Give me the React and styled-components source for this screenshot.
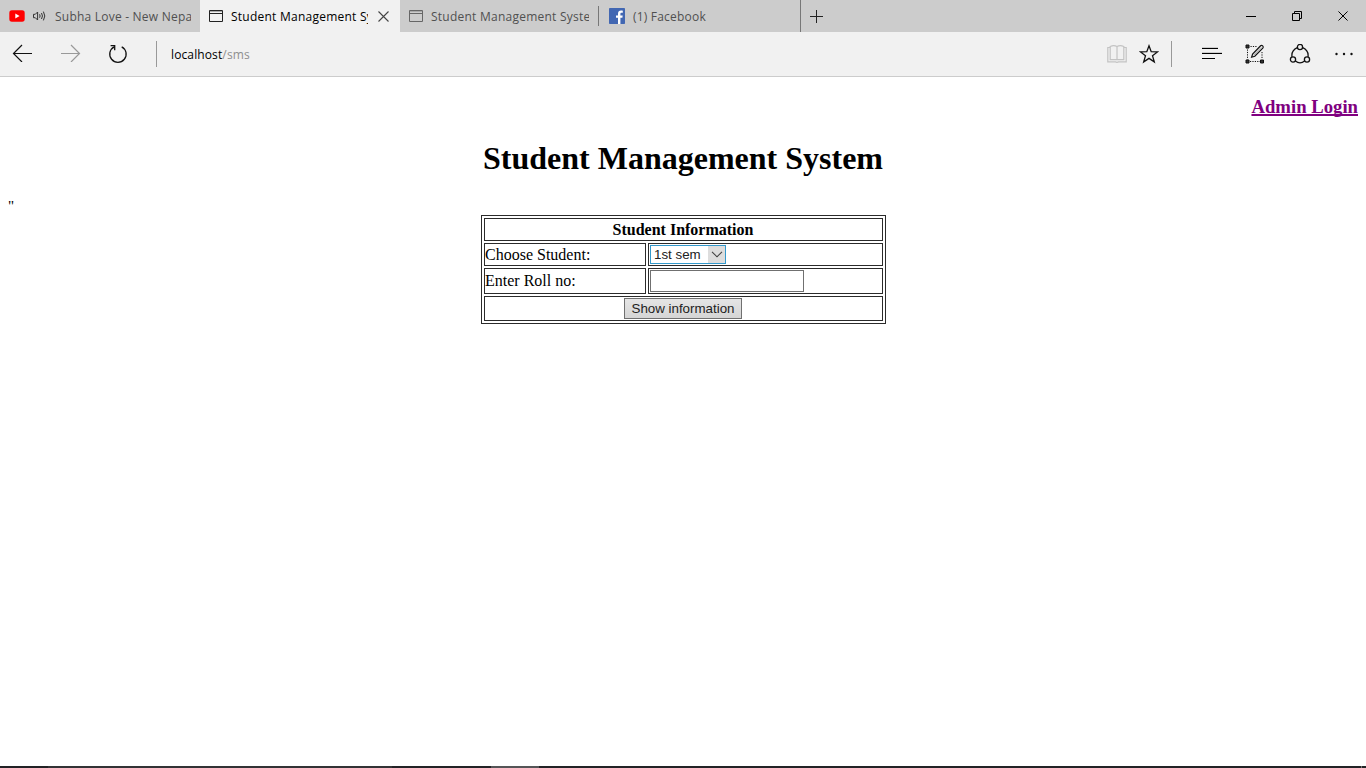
import React from 'react';
import styled, { createGlobalStyle } from 'styled-components';

const GlobalStyle = createGlobalStyle`
  *, *::before, *::after { box-sizing: border-box; }
  html, body { margin: 0; padding: 0; overflow: hidden; background: #fff; }
  svg { display: block; flex: none; }
`;

const Window = styled.div`
  width: 1366px;
  height: 768px;
  display: flex;
  flex-direction: column;
  overflow: hidden;
`;

const UI_FONT = `'Open Sans', 'Noto Sans', sans-serif`;

const TabStrip = styled.div`
  height: 32px;
  flex: none;
  display: flex;
  background: #ccc;
  font-family: ${UI_FONT};
  font-size: 12px;
`;

const Tab = styled.div`
  width: ${(p) => p.$width}px;
  height: 32px;
  flex: none;
  display: flex;
  align-items: center;
  padding-left: ${(p) => p.$inset || 9}px;
  color: ${(p) => (p.$active ? '#000' : '#505050')};
  background: ${(p) => (p.$active ? '#f1f1f1' : '#ccc')};
`;

const TabTitle = styled.span`
  width: ${(p) => p.$width}px;
  margin-left: 8px;
  padding-top: 2px;
  flex: none;
  overflow: hidden;
  white-space: nowrap;
  line-height: 18px;
  letter-spacing: ${(p) => p.$spacing || 0}px;
`;

const TabIcons = styled.span`
  display: flex;
  align-items: center;
  gap: 8px;
`;

const CloseTab = styled.span`
  margin-left: 10px;
`;

const Separator = styled.div`
  width: 1px;
  height: ${(p) => p.$height}px;
  flex: none;
  align-self: center;
  background: ${(p) => p.$color || '#777'};
`;

const NewTab = styled.div`
  display: flex;
  align-items: center;
  padding-left: 9px;
`;

const WindowControls = styled.div`
  margin-left: auto;
  display: flex;
`;

const ControlButton = styled.div`
  width: 46px;
  height: 32px;
  display: flex;
  align-items: center;
  justify-content: center;
`;

const Toolbar = styled.div`
  height: 45px;
  flex: none;
  display: flex;
  align-items: center;
  background: #f1f1f1;
  border-bottom: 1px solid #ccc;
  padding: 0 13px 0 12px;
`;

const NavButtons = styled.div`
  width: 144px;
  display: flex;
  gap: 27px;
`;

const Address = styled.div`
  margin-left: 14px;
  padding-top: 2px;
  font-family: ${UI_FONT};
  font-size: 12px;
  line-height: 18px;
  letter-spacing: 0.12px;
  color: #000;
`;

const AddressPath = styled.span`
  color: #8f8f8f;
`;

const ToolbarActions = styled.div`
  margin-left: auto;
  display: flex;
  align-items: center;
`;

const Action = styled.span`
  margin-left: ${(p) => p.$gap}px;
`;

const Page = styled.main`
  flex: 1;
  display: flex;
  flex-direction: column;
  background: #fff;
  color: #000;
  font-family: 'Liberation Serif', serif;
  font-size: 16px;
`;

const AdminHeading = styled.h3`
  margin: 19px 8px 0;
  height: 22px;
  line-height: 22px;
  font-size: 18.72px;
  text-align: right;
`;

const AdminLink = styled.a`
  color: #800080;
  text-decoration: underline;
  text-decoration-thickness: 2px;
  text-decoration-skip-ink: none;
`;

const Title = styled.h1`
  margin: 22px 0 0;
  height: 37px;
  line-height: 37px;
  font-size: 32px;
  text-align: center;
`;

const StrayQuote = styled.div`
  margin: 21px 8px 0;
  height: 17px;
  line-height: 17px;
  font-size: 15px;
`;

const InfoTable = styled.form`
  width: 405px;
  margin-left: 481px;
  padding: 2px;
  border: 1px solid #2b2b2b;
  display: grid;
  grid-template-columns: 162px 235px;
  grid-template-rows: 23px 23px 26px 25px;
  gap: 2px;
`;

const Cell = styled.div`
  grid-column: ${(p) => (p.$wide ? '1 / -1' : 'auto')};
  display: flex;
  align-items: center;
  justify-content: ${(p) => (p.$wide ? 'center' : 'flex-start')};
  padding: 0 ${(p) => (p.$wide ? 1 : 0)}px 0 ${(p) => (p.$field ? 1 : 0)}px;
  border: 1px solid #2b2b2b;
  font-size: 16px;
  font-weight: ${(p) => (p.$bold ? 'bold' : 'normal')};
  white-space: nowrap;
`;

const CellLabel = styled.span`
  line-height: 18px;
`;

const SemesterSelect = styled.div`
  width: 76px;
  height: 19px;
  display: flex;
  justify-content: space-between;
  border: 1px solid #3399cc;
  padding-left: 3px;
  font: 13.33px/17px 'Liberation Sans', sans-serif;
  color: #222;
`;

const SelectArrow = styled.span`
  width: 17px;
  display: flex;
  align-items: center;
  justify-content: center;
  background: #ddd;
`;

const RollInput = styled.input`
  width: 154px;
  height: 22px;
  margin: 0;
  padding: 1px 2px;
  border: 1px solid #707070;
  border-radius: 0;
  background: #fff;
  outline: none;
`;

const ShowButton = styled.button`
  width: 118px;
  height: 21px;
  margin: 0;
  padding: 0;
  border: 1px solid #707070;
  border-radius: 0;
  background: linear-gradient(#e5e5e5, #d5d5d5);
  color: #222;
  font: 13.33px/17px 'Liberation Sans', sans-serif;
  white-space: nowrap;
`;

const Taskbar = styled.div`
  height: 2px;
  flex: none;
  display: flex;
  background: #232326;
`;

const TaskbarPart = styled.div`
  width: ${(p) => p.$width}px;
  background: ${(p) => p.$color};
`;

const YoutubeIcon = () => (
  <svg width="16" height="16" viewBox="0 0 16 16">
    <rect x="0.3" y="2.3" width="15.4" height="11.4" rx="2.6" fill="#f00" />
    <path d="M6.3 5.6 10.6 8 6.3 10.4z" fill="#fff" />
  </svg>
);

const SpeakerIcon = () => (
  <svg width="14" height="12" viewBox="0 0 14 12" fill="none" stroke="#333" strokeWidth="1">
    <path d="M.5 4.3h1.8L4.6 2v8L2.3 7.7H.5z" />
    <path d="M6.6 4.3q1 1.7 0 3.4M8.5 3q1.9 3 0 6M10.4 1.6q2.8 4.4 0 8.8" />
  </svg>
);

const PageIcon = ({ color }) => (
  <svg width="14" height="14" viewBox="0 0 14 14" fill="none" stroke={color}>
    <path d="M0.5 1.5h13v11H0.5zM0.5 4.5h13" />
    <path d="M1 2.5h12" opacity="0.35" />
  </svg>
);

const FacebookIcon = () => (
  <svg width="16" height="16" viewBox="0 0 16 16">
    <rect width="16" height="16" rx="0.8" fill="#4267b2" />
    <path d="M9 16V9.8H7V7.4h2V5.7C9 3.7 10.2 2.6 12 2.6c.9 0 1.6.1 1.8.1v2.1h-1.2c-1 0-1.2.5-1.2 1.2v1.4h2.3l-.3 2.4h-2V16z" fill="#fff" />
  </svg>
);

const CrossIcon = ({ size, color }) => (
  <svg width={size} height={size} viewBox="0 0 11 11" fill="none" stroke={color} strokeWidth="1.1">
    <path d="M0.5 0.5l10 10M10.5 0.5l-10 10" />
  </svg>
);

const PlusIcon = () => (
  <svg width="13" height="13" viewBox="0 0 13 13" stroke="#222" fill="none">
    <path d="M0 6.5h13M6.5 0v13" />
  </svg>
);

const MinimizeIcon = () => (
  <svg width="10" height="10" viewBox="0 0 10 10" stroke="#000" fill="none">
    <path d="M0 5.5h10" />
  </svg>
);

const RestoreIcon = () => (
  <svg width="10" height="10" viewBox="0 0 10 10" stroke="#000" fill="none">
    <path d="M0.5 2.5h7v7h-7zM2.5 2.5v-2h7v7h-2" />
  </svg>
);

const ArrowIcon = ({ back, color }) => (
  <svg width="21" height="18" viewBox="0 0 21 18" fill="none" stroke={color} strokeWidth="1.2">
    {back ? <path d="M20 9.5H1.5M10 1L1.5 9.5 10 18" /> : <path d="M1 9.5h18.5M11 1l8.5 8.5L11 18" />}
  </svg>
);

const ReloadIcon = () => (
  <svg width="20" height="20" viewBox="0 0 20 20" fill="none" stroke="#111" strokeWidth="1.3">
    <path d="M13.7 2.8A8.2 8.2 0 1 1 6.2 2.8" />
    <path d="M2.6 1.6h4.1v4.6" />
  </svg>
);

const BookIcon = () => (
  <svg width="20" height="20" viewBox="0 0 20 20" fill="none" stroke="#c3c3c3" strokeWidth="1.2">
    <path d="M3.2 2.5Q7 .8 10 2.6 13 .8 16.8 2.5v13.2H3.2zM10 2.6v13.2" />
    <path d="M3.2 3.5H.8v14.3h7.4q1.8 1.2 3.6 0h7.4V3.5h-2.4" />
  </svg>
);

const StarIcon = () => (
  <svg width="20" height="20" viewBox="0 0 20 20" fill="none" stroke="#111" strokeWidth="1.3">
    <path d="M10 1.8l2.2 5.9 6.3.2-5 3.9 1.8 6.1-5.3-3.5-5.3 3.5 1.8-6.1-5-3.9 6.3-.2z" />
  </svg>
);

const HubIcon = () => (
  <svg width="20" height="14" viewBox="0 0 20 14" fill="none" stroke="#000">
    <path d="M0 1.5h16M0 6.5h20M0 11.5h13" />
    <path d="M0 .5h16M0 5.5h20" opacity=".15" />
  </svg>
);

const NoteIcon = () => (
  <svg width="20" height="20" viewBox="0 0 20 20" fill="none" stroke="#111">
    <path d="M1 1h3v3H1zM1 16h3v3H1zM15.5 16h3v3h-3z" fill="#333" />
    <path d="M5.5 2.5h7M2.5 5.5v10M5 17.5h10M17 8v7" strokeDasharray="1.2 1.2" />
    <path d="M6.6 13.2l1-3.2 8-8.2q1-.9 2.1.1t.1 2.2l-8 8.1z" strokeWidth="1.2" />
    <path d="M8.5 11.3l7.8-8" opacity=".35" />
  </svg>
);

const ShareIcon = () => (
  <svg width="22" height="20" viewBox="0 0 22 20" fill="none" stroke="#111" strokeWidth="1.3">
    <circle cx="11" cy="3" r="2.6" />
    <circle cx="4" cy="15.5" r="2.6" />
    <circle cx="18" cy="15.5" r="2.6" />
    <path d="M8.3 3.6Q2.1 6.4 3 12.9M13.7 3.6q6.2 2.8 5.3 9.3M6.4 17.1q4.6 3.7 9.2 0" />
  </svg>
);

const MoreIcon = () => (
  <svg width="18" height="4" viewBox="0 0 18 4" fill="#111">
    <circle cx="1.5" cy="2" r="1.2" />
    <circle cx="9" cy="2" r="1.2" />
    <circle cx="16.5" cy="2" r="1.2" />
  </svg>
);

const ChevronIcon = () => (
  <svg width="12" height="7" viewBox="0 0 12 7" fill="none" stroke="#444" strokeWidth="1.1">
    <path d="M1 .8l5 5 5-5" />
  </svg>
);

export default function App() {
  return (
    <Window>
      <GlobalStyle />
      <TabStrip>
        <Tab $width={200}>
          <TabIcons>
            <YoutubeIcon />
            <SpeakerIcon />
          </TabIcons>
          <TabTitle $width={136} $spacing={0.22}>Subha Love - New Nepali</TabTitle>
        </Tab>
        <Tab $width={200} $active>
          <PageIcon color="#222" />
          <TabTitle $width={137} $spacing={0.24}>Student Management System</TabTitle>
          <CloseTab><CrossIcon size={11} color="#444" /></CloseTab>
        </Tab>
        <Tab $width={198}>
          <PageIcon color="#666" />
          <TabTitle $width={158} $spacing={0.24}>Student Management System</TabTitle>
        </Tab>
        <Separator $height={20} />
        <Tab $width={201} $inset={10}>
          <FacebookIcon />
          <TabTitle $width={150} $spacing={0.2}>(1) Facebook</TabTitle>
        </Tab>
        <Separator $height={32} />
        <NewTab><PlusIcon /></NewTab>
        <WindowControls>
          <ControlButton><MinimizeIcon /></ControlButton>
          <ControlButton><RestoreIcon /></ControlButton>
          <ControlButton><CrossIcon size={10} color="#000" /></ControlButton>
        </WindowControls>
      </TabStrip>
      <Toolbar>
        <NavButtons>
          <ArrowIcon back color="#111" />
          <ArrowIcon color="#999" />
          <ReloadIcon />
        </NavButtons>
        <Separator $height={26} $color="#999" />
        <Address>localhost<AddressPath>/sms</AddressPath></Address>
        <ToolbarActions>
          <BookIcon />
          <Action $gap={12}><StarIcon /></Action>
          <Action $gap={12}><Separator $height={26} $color="#999" /></Action>
          <Action $gap={30}><HubIcon /></Action>
          <Action $gap={23}><NoteIcon /></Action>
          <Action $gap={24}><ShareIcon /></Action>
          <Action $gap={24}><MoreIcon /></Action>
        </ToolbarActions>
      </Toolbar>
      <Page>
        <AdminHeading><AdminLink>Admin Login</AdminLink></AdminHeading>
        <Title>Student Management System</Title>
        <StrayQuote>"</StrayQuote>
        <InfoTable onSubmit={(e) => e.preventDefault()}>
          <Cell $wide $bold><CellLabel>Student Information</CellLabel></Cell>
          <Cell><CellLabel>Choose Student:</CellLabel></Cell>
          <Cell $field>
            <SemesterSelect>
              1st sem
              <SelectArrow><ChevronIcon /></SelectArrow>
            </SemesterSelect>
          </Cell>
          <Cell><CellLabel>Enter Roll no:</CellLabel></Cell>
          <Cell $field><RollInput /></Cell>
          <Cell $wide><ShowButton type="submit">Show information</ShowButton></Cell>
        </InfoTable>
      </Page>
      <Taskbar>
        <TaskbarPart $width={48} $color="#222225" />
        <TaskbarPart $width={344} $color="#333335" />
        <TaskbarPart $width={99} $color="#232326" />
        <TaskbarPart $width={48} $color="#555557" />
        <TaskbarPart $width={822} $color="#232326" />
        <TaskbarPart $width={1} $color="#777" />
      </Taskbar>
    </Window>
  );
}
